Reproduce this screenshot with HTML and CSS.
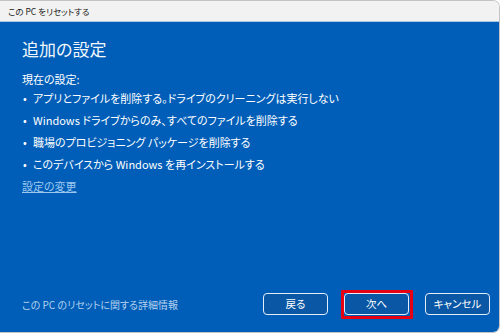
FILE: index.html
```html
<!DOCTYPE html>
<html lang="ja">
<head>
<meta charset="utf-8">
<title>この PC をリセットする</title>
<link rel="stylesheet" href="styles.css">
</head>
<body>
<div class="window">
  <div class="titlebar">この PC をリセットする</div>
  <div class="content">
    <h1 class="heading">追加の設定</h1>
    <p class="label">現在の設定:</p>
    <ul class="list">
      <li>アプリとファイルを削除する。ドライブのクリーニングは実行しない</li>
      <li>Windows ドライブからのみ、すべてのファイルを削除する</li>
      <li>職場のプロビジョニング パッケージを削除する</li>
      <li>このデバイスから Windows を再インストールする</li>
    </ul>
    <a class="link" href="#">設定の変更</a>
    <div class="footer">
      <span class="info">この PC のリセットに関する詳細情報</span>
      <div class="buttons">
        <button class="btn">戻る</button>
        <button class="btn highlight">次へ</button>
        <button class="btn">キャンセル</button>
      </div>
    </div>
  </div>
</div>
</body>
</html>
```
FILE: styles.css
```css
html, body {
  margin: 0;
  padding: 0;
  background: #ffffff;
}
body {
  font-family: "Noto Sans CJK JP", "Noto Sans", sans-serif;
  font-feature-settings: "palt";
}
.window {
  box-sizing: border-box;
  width: 500px;
  height: 333px;
  border: 1px solid #c4c4c4;
  border-left: none;
  border-radius: 0 7px 7px 0;
  overflow: hidden;
  display: flex;
  flex-direction: column;
}
.titlebar {
  height: 20px;
  line-height: 20px;
  background: #f2f2f2;
  border-bottom: 1px solid #a8c6e6;
  padding-left: 8px;
  font-size: 8.5px;
  color: #1b1b1b;
}
.content {
  flex: 1;
  background: #005eb8;
  color: #ffffff;
  padding: 16px 9px 17px 22px;
  display: flex;
  flex-direction: column;
}
.heading {
  margin: 0;
  font-weight: normal;
  font-size: 17px;
  line-height: 22px;
  color: #f2f7fc;
}
.label {
  margin: 11px 0 0;
  font-size: 11px;
  line-height: 16px;
}
.list {
  list-style: none;
  margin: 0;
  padding: 0;
}
.list li {
  font-size: 11px;
  line-height: 22px;
  white-space: nowrap;
  display: flex;
}
.list li::before {
  content: "•";
  width: 10px;
  padding-left: 1px;
  flex: none;
}
.link {
  align-self: flex-start;
  font-size: 11px;
  line-height: 22px;
  color: #9cc8f0;
  text-decoration: underline;
}
.footer {
  margin-top: auto;
  display: flex;
  align-items: center;
  justify-content: space-between;
}
.info {
  font-size: 10px;
  color: #b5d1ee;
}
.buttons {
  display: flex;
  gap: 16px;
}
.btn {
  position: relative;
  box-sizing: border-box;
  width: 65px;
  height: 22px;
  background: #0a57a5;
  border: 1.5px solid #e4edf7;
  border-radius: 4px;
  color: #ffffff;
  font-family: inherit;
  font-feature-settings: "palt";
  font-size: 10.5px;
  padding: 0;
  line-height: 18px;
}
.highlight::after {
  content: "";
  position: absolute;
  left: -4.5px;
  top: -4.5px;
  right: -4.5px;
  bottom: -4.5px;
  border: 3px solid #e60012;
  border-radius: 1px;
}
```
